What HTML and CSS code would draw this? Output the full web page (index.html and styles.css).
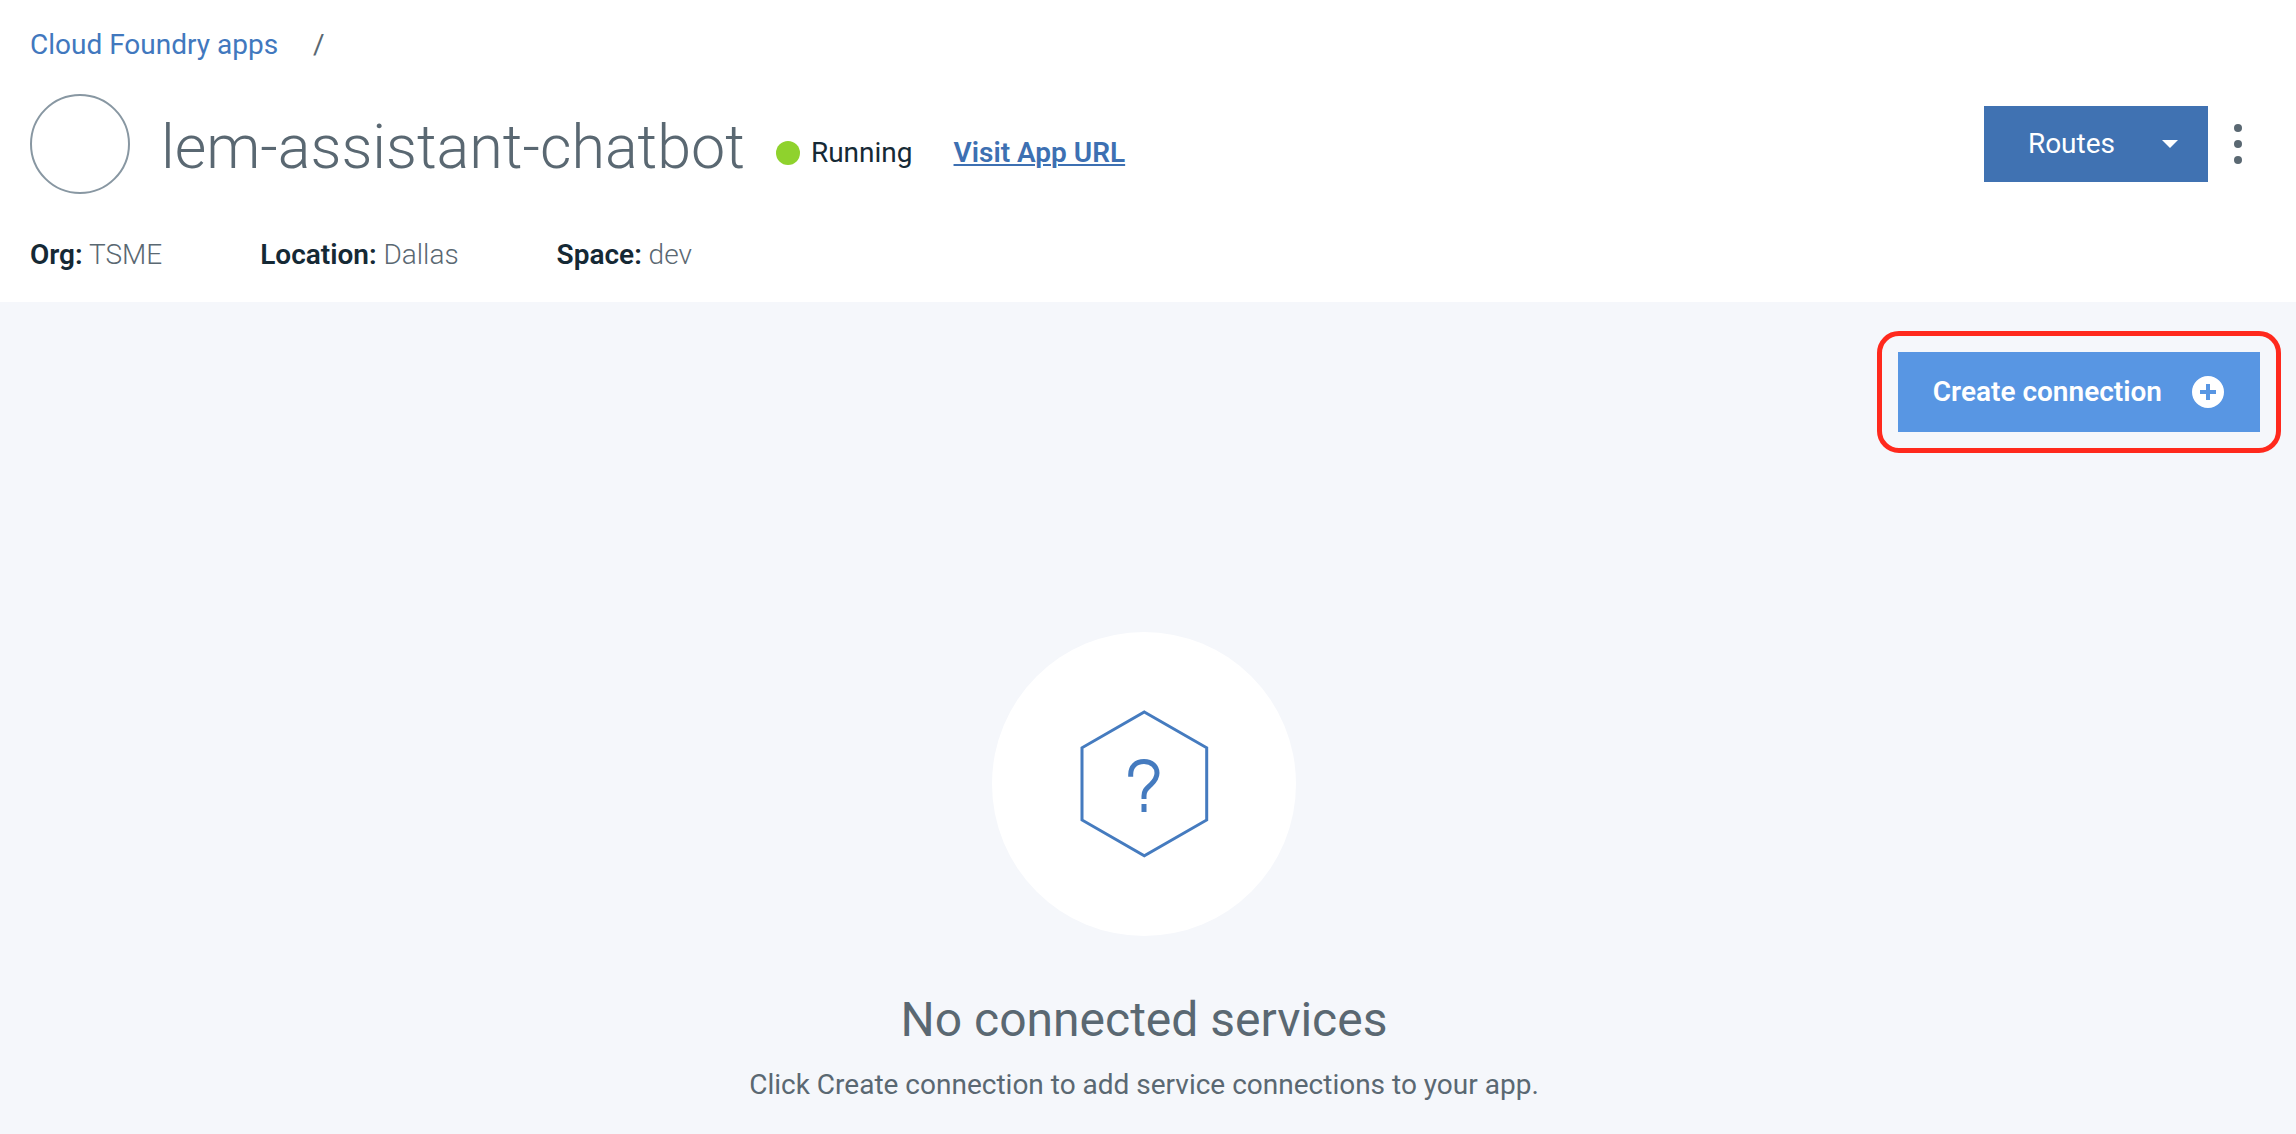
FILE: index.html
```html
<!DOCTYPE html>
<html lang="en">
<head>
  <meta charset="utf-8">
  <meta name="viewport" content="width=device-width, initial-scale=1">
  <title>lem-assistant-chatbot</title>
  <link rel="stylesheet" href="styles.css">
</head>
<body>
  <header class="app-header">
    <nav class="breadcrumb">
      <a class="breadcrumb-link" href="#">Cloud Foundry apps</a>
      <span class="breadcrumb-separator">/</span>
    </nav>

    <div class="title-row">
      <span class="app-avatar"></span>
      <h1 class="app-name">lem-assistant-chatbot</h1>
      <div class="app-status">
        <span class="status-dot"></span>
        <span>Running</span>
        <a class="app-url" href="#">Visit App URL</a>
      </div>
      <div class="app-actions">
        <button class="routes-button" type="button">
          Routes
          <svg width="16" height="8" viewBox="0 0 16 8" aria-hidden="true"><path d="M0 0h16L8 8z" fill="currentColor"/></svg>
        </button>
        <button class="menu-button" type="button" aria-label="More actions">
          <svg width="8" height="40" viewBox="0 0 8 40" fill="currentColor" aria-hidden="true">
            <circle cx="4" cy="4" r="4"/><circle cx="4" cy="20" r="4"/><circle cx="4" cy="36" r="4"/>
          </svg>
        </button>
      </div>
    </div>

    <ul class="app-meta">
      <li><strong>Org:</strong> TSME</li>
      <li><strong>Location:</strong> Dallas</li>
      <li><strong>Space:</strong> dev</li>
    </ul>
  </header>

  <main class="connections">
    <div class="toolbar">
      <div class="highlight">
        <button class="create-button" type="button">
          Create connection
          <svg width="32" height="32" viewBox="0 0 32 32" fill="currentColor" aria-hidden="true"><path fill-rule="evenodd" d="M16 0a16 16 0 1 1 0 32a16 16 0 0 1 0-32zM14 8v6H8v4h6v6h4v-6h6v-4h-6V8z"/></svg>
        </button>
      </div>
    </div>

    <section class="empty-state">
      <svg class="empty-icon" viewBox="0 0 304 304" fill="none" stroke="#457bbf" aria-hidden="true">
        <circle cx="152" cy="152" r="152" fill="#fff" stroke="none"/>
        <path d="M152.3 80L214.7 115.8V188L152.3 223.8L90 188V115.8z" stroke-width="3"/>
        <path d="M138.7 144.7V142.5C138.7 134.5 144 129.5 152 129.5S165 134.5 165 141C165 146 162.5 149 159 152.5C155 156.5 152 158 152 164V167M152 172v8" stroke-width="5"/>
      </svg>
      <h2 class="empty-title">No connected services</h2>
      <p class="empty-text">Click Create connection to add service connections to your app.</p>
    </section>
  </main>
</body>
</html>
```
FILE: styles.css
```css
* {
  box-sizing: border-box;
}

body {
  display: flex;
  flex-direction: column;
  min-height: 100vh;
  margin: 0;
  background: #fff;
  color: #5a6872;
  font: 400 28px/36px Roboto, sans-serif;
}

h1,
h2,
p,
ul {
  margin: 0;
  padding: 0;
}

button {
  border: 0;
  font: inherit;
  cursor: pointer;
}

.app-header {
  padding: 27px 28px 29px 30px;
}

.breadcrumb {
  display: flex;
  gap: 35px;
}

.breadcrumb-link {
  color: #4178be;
  text-decoration: none;
}

.title-row {
  display: flex;
  align-items: center;
  margin-top: 31px;
}

.app-avatar {
  flex: none;
  width: 100px;
  height: 100px;
  border: 2px solid #8897a2;
  border-radius: 50%;
}

.app-name {
  margin-left: 31px;
  padding-top: 6px;
  font-size: 61px;
  font-weight: 300;
  line-height: 80px;
}

.app-status {
  display: flex;
  align-items: center;
  gap: 11px;
  margin-left: 31px;
  padding-top: 18px;
  color: #152935;
}

.status-dot {
  width: 24px;
  height: 24px;
  border-radius: 50%;
  background: #8fd22d;
}

.app-url {
  margin-left: 30px;
  color: #3d70b2;
  font-weight: 600;
  text-decoration-thickness: 2px;
  text-underline-offset: 2px;
}

.app-actions {
  display: flex;
  margin-left: auto;
}

.routes-button {
  display: flex;
  align-items: center;
  gap: 47px;
  height: 76px;
  padding: 0 30px 0 44px;
  background: #4072b2;
  color: #fff;
}

.menu-button {
  display: flex;
  align-items: center;
  justify-content: center;
  width: 60px;
  padding: 0;
  background: none;
  color: #5a6872;
}

.app-meta {
  display: flex;
  gap: 98px;
  margin-top: 43px;
  font-weight: 300;
  list-style: none;
}

.app-meta strong {
  color: #152935;
  font-weight: 600;
}

.connections {
  flex: 1;
  padding-bottom: 31px;
  background: #f5f7fb;
}

.toolbar {
  display: flex;
  justify-content: flex-end;
  padding: 29px 15px 0;
}

.highlight {
  padding: 16px;
  border: 5px solid #ff291d;
  border-radius: 22px;
}

.create-button {
  display: flex;
  align-items: center;
  gap: 30px;
  height: 80px;
  padding: 0 36px 0 35px;
  background: #5896e3;
  color: #fff;
  font-weight: 600;
}

.empty-state {
  display: flex;
  flex-direction: column;
  align-items: center;
  padding: 179px 8px 0 0;
  text-align: center;
}

.empty-icon {
  width: 304px;
  height: 304px;
}

.empty-title {
  margin-top: 52px;
  font-size: 48px;
  font-weight: 400;
  line-height: 64px;
}

.empty-text {
  margin-top: 15px;
}
```
